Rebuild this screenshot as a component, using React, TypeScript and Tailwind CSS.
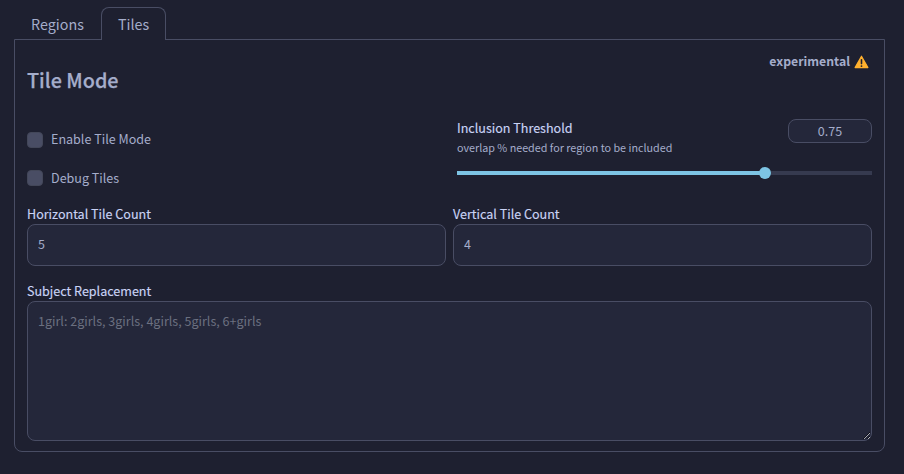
import React from "react";

const labelClass = "block h-[20px] text-[12.55px] leading-[20px] text-[#cad3f5] whitespace-nowrap [-webkit-text-stroke:0.15px_#cad3f5]";
const fieldClass =
  "block w-full rounded-lg border border-[#494d64] bg-[#24273a] px-[10px] text-[12.55px] text-[#a5adcb] outline-none placeholder:text-[#6b7080]";

function Check({ label, textClass }: { label: string; textClass: string }) {
  return (
    <label className="flex h-[20px] items-center gap-2">
      <span className="size-4 rounded-[4px] border border-[#434759] bg-[#494d64]" />
      <span className={`text-[12.55px] leading-[20px] ${textClass}`}>{label}</span>
    </label>
  );
}

function Count({ label, value }: { label: string; value: string }) {
  return (
    <label className="flex-1">
      <span className={labelClass}>{label}</span>
      <input className={`${fieldClass} h-[42px] pb-[4px]`} defaultValue={value} />
    </label>
  );
}

function Warning() {
  return (
    <svg width="15" height="14" viewBox="0 0 15 14">
      <path d="M7.5 1.2 L13.9 12.6 H1.1 Z" fill="#ffb02e" stroke="#ffb02e" strokeWidth="1.2" strokeLinejoin="round" />
      <path d="M7.5 4.9 V8.6" stroke="#1e2030" strokeWidth="1.6" strokeLinecap="round" />
      <circle cx="7.5" cy="11.1" r="0.95" fill="#1e2030" />
    </svg>
  );
}

export default function App() {
  return (
    <main className="h-[474px] w-[904px] overflow-hidden bg-[#1e2030] pl-[14px] pt-[7px] font-['Noto_Sans_CJK_SC',sans-serif] text-[#a5adcb]">
      <nav className="relative z-10 flex h-[33px] text-[14.3px]">
        <button className="h-[32px] w-[87px] pb-[1px] pt-[3px] leading-[24px]">Regions</button>
        <button className="h-[33px] w-[65px] rounded-t-lg border border-b-0 border-[#494d64] bg-[#1e2030] pb-[1px] leading-[24px]">
          Tiles
        </button>
      </nav>
      <section className="-mt-px h-[413px] w-[871px] rounded-b-lg border border-[#494d64] px-3">
        <header className="flex h-[79px] justify-between">
          <h2 className="pt-[24px] text-[19.8px] font-medium leading-[32px] [-webkit-text-stroke:0.25px_#a5adcb]">Tile Mode</h2>
          <div className="mt-[12px] flex h-[20px] items-center gap-[4px] pr-[3px] text-[12.25px] font-bold leading-[20px]">
            <span className="-mt-[2px]">experimental</span>
            <Warning />
          </div>
        </header>
        <div className="flex h-[85px]">
          <div className="flex w-[430px] flex-col gap-[18px] pt-[11px]">
            <Check label="Enable Tile Mode" textClass="-mt-[2px]" />
            <Check label="Debug Tiles" textClass="mt-0" />
          </div>
          <div className="flex-1">
            <div className="flex justify-between">
              <div>
                <div className={`${labelClass} -mt-px mb-px`}>Inclusion Threshold</div>
                <div className="text-[10.75px] leading-[18px]">overlap % needed for region to be included</div>
              </div>
              <div className="h-[24px] w-[84px] rounded-lg border border-[#494d64] bg-[#24273a] text-center text-[12.5px] leading-[21px]">
                0.75
              </div>
            </div>
            <div className="mt-[10px] flex h-3 items-center">
              <span className="h-1 w-[303px] bg-[#7dc4e4]" />
              <span className="-ml-px size-3 rounded-full bg-[#7dc4e4]" />
              <span className="h-1 flex-1 bg-[#363a4f]" />
            </div>
          </div>
        </div>
        <div className="flex gap-[7px]">
          <Count label="Horizontal Tile Count" value="5" />
          <Count label="Vertical Tile Count" value="4" />
        </div>
        <label className="mt-[15px] block">
          <span className={labelClass}>Subject Replacement</span>
          <textarea
            className={`${fieldClass} h-[140px] resize pt-[8px] leading-[21px]`}
            placeholder="1girl: 2girls, 3girls, 4girls, 5girls, 6+girls"
          />
        </label>
      </section>
    </main>
  );
}
